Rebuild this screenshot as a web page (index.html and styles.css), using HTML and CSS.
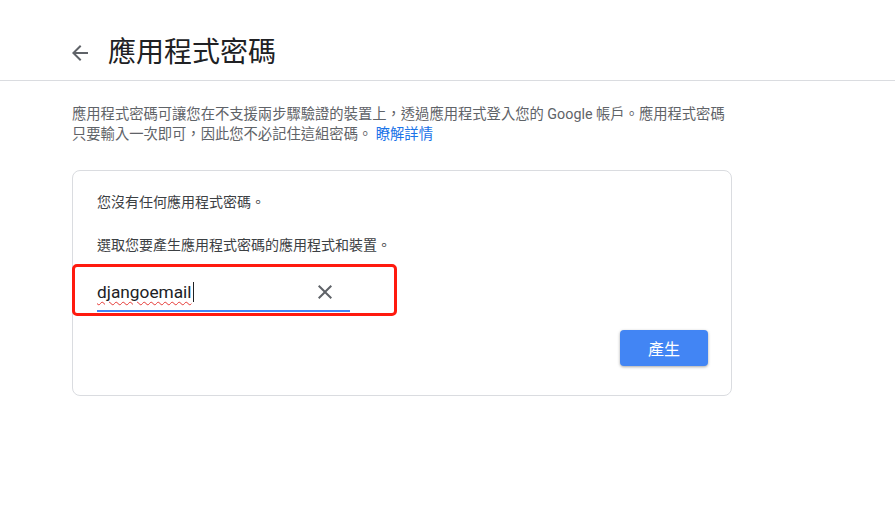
FILE: index.html
```html
<!DOCTYPE html>
<html lang="zh-Hant">
<head>
<meta charset="utf-8">
<title>應用程式密碼</title>
<link rel="stylesheet" href="styles.css">
</head>
<body>
<header class="header">
  <svg class="back" viewBox="0 0 24 24" width="24" height="24"><path d="M20 11H7.83l5.59-5.59L12 4l-8 8 8 8 1.41-1.41L7.83 13H20v-2z" fill="#5f6368"/></svg>
  <h1 class="title">應用程式密碼</h1>
</header>
<main class="main">
  <p class="desc"><span>應用程式密碼可讓您在不支援兩步驟驗證的裝置上，透過應用程式登入您的 Google 帳戶。應用程式密碼只要輸入一次即可，因此您不必記住這組密碼。</span> <a class="link" href="#">瞭解詳情</a></p>
  <section class="card">
    <p class="line">您沒有任何應用程式密碼。</p>
    <p class="line second">選取您要產生應用程式密碼的應用程式和裝置。</p>
    <div class="field">
      <span class="value"><span class="typed">djangoemail</span><span class="caret"></span></span>
      <svg class="clear" viewBox="0 0 24 24" width="24" height="24"><path d="M19 6.41L17.59 5 12 10.59 6.41 5 5 6.41 10.59 12 5 17.59 6.41 19 12 13.41 17.59 19 19 17.59 13.41 12z" fill="#5f6368"/></svg>
    </div>
    <div class="actions"><button class="btn">產生</button></div>
    <div class="mark"></div>
  </section>
</main>
</body>
</html>
```
FILE: styles.css
```css
* { box-sizing: border-box; }
body {
  margin: 0;
  font-family: Roboto, "Noto Sans CJK TC", sans-serif;
  color: #202124;
  background: #fff;
}
.header {
  display: flex;
  align-items: center;
  height: 81px;
  padding: 27px 0 1px 68px;
  border-bottom: 1px solid #dadce0;
}
.back { flex: none; }
.title {
  margin: 0 0 0 16px;
  font-size: 28px;
  font-weight: 400;
  line-height: 36px;
  color: #202124;
}
.main {
  width: 660px;
  margin-left: 72px;
}
.desc {
  width: 662px;
  margin: 23px 0 26px;
  font-size: 14.3px;
  line-height: 20px;
  color: #5f6368;
}
.link {
  color: #1a73e8;
  text-decoration: none;
}
.card {
  position: relative;
  height: 226px;
  border: 1px solid #dadce0;
  border-radius: 8px;
  padding: 21px 23px 0 24px;
}
.line {
  margin: 0;
  font-size: 14px;
  line-height: 20px;
  color: #3c4043;
}
.second { margin-top: 23px; }
.field {
  display: flex;
  align-items: center;
  justify-content: space-between;
  width: 253px;
  height: 36px;
  margin-top: 21px;
  padding-bottom: 2px;
  border-bottom: 2px solid #4285f4;
}
.value {
  display: flex;
  align-items: center;
  font-size: 17.3px;
  color: #202124;
}
.typed {
  text-decoration: underline wavy #e53935;
  text-decoration-thickness: 1px;
  text-underline-offset: 3px;
}
.caret {
  width: 1px;
  height: 20px;
  margin-left: 1px;
  background: #202124;
}
.clear { margin-right: 13px; }
.actions {
  display: flex;
  justify-content: flex-end;
  margin-top: 18px;
}
.btn {
  width: 88px;
  height: 36px;
  border: none;
  border-radius: 4px;
  background: #4285f4;
  color: #fff;
  font-family: Roboto, "Noto Sans CJK TC", sans-serif;
  font-size: 16px;
  box-shadow: 0 1px 3px rgba(0,0,0,0.35);
}
.mark {
  position: absolute;
  left: -1px;
  top: 93px;
  width: 325px;
  height: 52px;
  border: 3px solid #ff1a0f;
  border-radius: 5px;
  pointer-events: none;
}
```
